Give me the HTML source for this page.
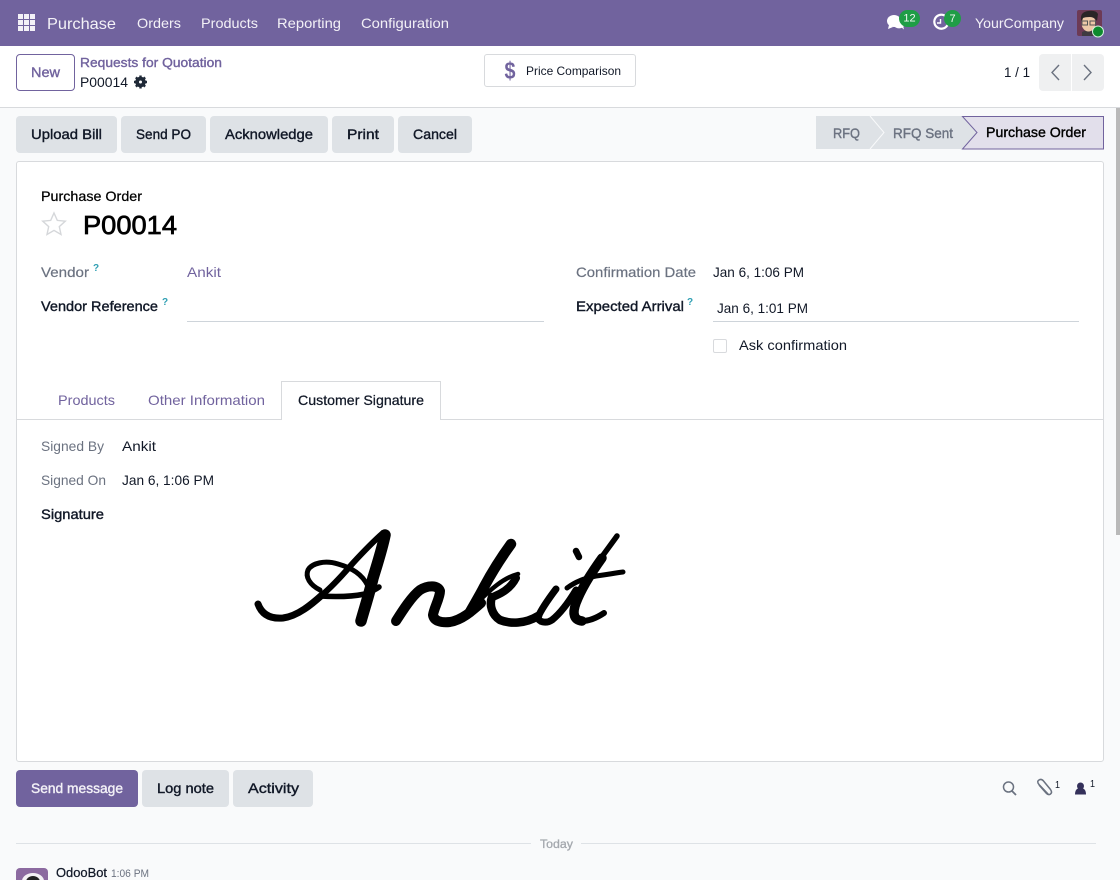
<!DOCTYPE html>
<html lang="en"><head><meta charset="utf-8"><title>P00014 - Purchase</title>
<style>
html,body{margin:0;padding:0}
body{width:1120px;height:880px;overflow:hidden;position:relative;background:#f9fafb;font-family:"Liberation Sans",sans-serif}
.b{position:absolute;box-sizing:border-box}
.g{background:#dee2e6;border-radius:4px}
svg{position:absolute;left:0;top:0}
text{font-family:"Liberation Sans",sans-serif;font-size:14px;fill:#374151}
.n{fill:#f3f1f7}
.y{fill:#6b7280}
.p{fill:#71639e}
.k{fill:#111827}
.m{stroke-width:.38px}
.k.m{stroke:#111827}
.p.m{stroke:#71639e}
.y.m{stroke:#6b7280}
.n.m{stroke:#f3f1f7}
.q{font-size:10px;fill:#2f9fb3;font-weight:bold}
</style></head><body>
<div class="b" style="left:0;top:0;width:1120px;height:46px;background:#71639e"></div>
<div class="b" style="left:0;top:46px;width:1120px;height:62px;background:#fff;border-bottom:1px solid #d8dadd"></div>
<div class="b" style="left:1116px;top:108px;width:4px;height:427px;background:#b9b9b9"></div>
<div class="b" style="left:16px;top:54px;width:59px;height:37px;background:#fff;border:1px solid #71639e;border-radius:4px"></div>
<div class="b" style="left:484px;top:54px;width:152px;height:33px;background:#fff;border:1px solid #d8dadd;border-radius:3px"></div>
<div class="b" style="left:1039px;top:54px;width:32px;height:37px;background:#eff0f1;border-radius:4px 0 0 4px"></div>
<div class="b" style="left:1072px;top:54px;width:32px;height:37px;background:#eff0f1;border-radius:0 4px 4px 0"></div>
<div class="b g" style="left:16px;top:116px;width:101px;height:37px"></div>
<div class="b g" style="left:121px;top:116px;width:85px;height:37px"></div>
<div class="b g" style="left:210px;top:116px;width:118px;height:37px"></div>
<div class="b g" style="left:332px;top:116px;width:62px;height:37px"></div>
<div class="b g" style="left:398px;top:116px;width:74px;height:37px"></div>
<div class="b" style="left:16px;top:161px;width:1088px;height:601px;background:#fff;border:1px solid #d8dadd;border-radius:3px"></div>
<div class="b" style="left:17px;top:419px;width:1086px;height:1px;background:#d8dadd"></div>
<div class="b" style="left:281px;top:381px;width:160px;height:39px;background:#fff;border:1px solid #d8dadd;border-bottom:0"></div>
<div class="b" style="left:187px;top:321px;width:357px;height:1px;background:#ced4da"></div>
<div class="b" style="left:713px;top:321px;width:366px;height:1px;background:#ced4da"></div>
<div class="b" style="left:713px;top:339px;width:14px;height:14px;background:#fff;border:1px solid #d8dadd;border-radius:2px"></div>
<div class="b" style="left:16px;top:770px;width:122px;height:37px;background:#71639e;border-radius:4px"></div>
<div class="b g" style="left:142px;top:770px;width:87px;height:37px"></div>
<div class="b g" style="left:233px;top:770px;width:80px;height:37px"></div>
<div class="b" style="left:16px;top:843px;width:515px;height:1px;background:#dee2e6"></div>
<div class="b" style="left:581px;top:843px;width:515px;height:1px;background:#dee2e6"></div>

<svg width="1120" height="880" viewBox="0 0 1120 880" xmlns="http://www.w3.org/2000/svg">
<!-- apps grid -->
<g fill="#f3f1f7"><rect x="18" y="14" width="5" height="5"/><rect x="24" y="14" width="5" height="5"/><rect x="30" y="14" width="5" height="5"/><rect x="18" y="20" width="5" height="5"/><rect x="24" y="20" width="5" height="5"/><rect x="30" y="20" width="5" height="5"/><rect x="18" y="26" width="5" height="5"/><rect x="24" y="26" width="5" height="5"/><rect x="30" y="26" width="5" height="5"/></g>
<text class="n" x="47" y="29" style="font-size:16px" textLength="69" lengthAdjust="spacingAndGlyphs">Purchase</text>
<text class="n" x="137" y="28" textLength="44" lengthAdjust="spacingAndGlyphs">Orders</text>
<text class="n" x="201" y="28" textLength="57" lengthAdjust="spacingAndGlyphs">Products</text>
<text class="n" x="277" y="28" textLength="64" lengthAdjust="spacingAndGlyphs">Reporting</text>
<text class="n" x="361" y="28" textLength="88" lengthAdjust="spacingAndGlyphs">Configuration</text>
<!-- systray -->
<g fill="#fff"><ellipse cx="894" cy="21" rx="7" ry="6"/><path d="M889 25l-1 4 5-2z"/><ellipse cx="899" cy="25" rx="5" ry="3.4"/><path d="M901 27l3 2.500-1-4z"/></g>
<rect x="899" y="10" width="21" height="17" rx="8.500" fill="#1f9d46"/>
<text x="909.500" y="21.500" text-anchor="middle" style="font-size:11px;fill:#f2f8f3">12</text>
<path d="M946 16.500A7 7 0 1 0 947.500 25" fill="none" stroke="#fff" stroke-width="2.200"/><path d="M940.500 19v4h-3.500" fill="none" stroke="#fff" stroke-width="1.400"/>
<rect x="944" y="10" width="17" height="17" rx="8.500" fill="#1f9d46"/>
<text x="952.500" y="22" text-anchor="middle" style="font-size:11px;fill:#f2f8f3">7</text>
<text class="n" x="975" y="28" textLength="89" lengthAdjust="spacingAndGlyphs">YourCompany</text>
<!-- user avatar -->
<rect x="1077" y="10" width="25" height="26" rx="2" fill="#6d3a55"/>
<path d="M1082 36v-4q5-3 10-1l5 5z" fill="#3f3a40"/>
<ellipse cx="1088.500" cy="23" rx="7" ry="8.500" fill="#eec8a8"/>
<path d="M1081 20q-1-8 7-9q8-1 10 3l-1 7q-3-4-7-4q-5 0-7 1l-1 3z" fill="#2a2526"/>
<g fill="none" stroke="#555" stroke-width="1"><rect x="1082" y="21" width="5.500" height="4"/><rect x="1090" y="21" width="5.500" height="4"/></g>
<circle cx="1098" cy="31.500" r="5.500" fill="#0d8a2d" stroke="#d5eee0" stroke-width="1"/>
<!-- control panel -->
<text class="p m" x="31" y="77" textLength="29" lengthAdjust="spacingAndGlyphs">New</text>
<text class="p m" x="80" y="67" style="font-size:13px" textLength="142" lengthAdjust="spacingAndGlyphs">Requests for Quotation</text>
<text class="k" x="80" y="87" textLength="48" lengthAdjust="spacingAndGlyphs">P00014</text>
<g transform="translate(140.500 82)"><circle r="3.700" fill="none" stroke="#1f2937" stroke-width="3.200"/><g stroke="#1f2937" stroke-width="2.400"><path d="M0-6.500V6.500M-6.500 0H6.500M-4.600-4.600L4.600 4.600M-4.600 4.600L4.600-4.600"/></g><circle r="1.500" fill="#fff"/></g>
<text class="p" x="504.500" y="78.500" style="font-size:24px;font-weight:bold" textLength="11" lengthAdjust="spacingAndGlyphs">$</text>
<text class="k" x="526" y="75" style="font-size:12px" textLength="95" lengthAdjust="spacingAndGlyphs">Price Comparison</text>
<text class="k" x="1004" y="77" textLength="26" lengthAdjust="spacingAndGlyphs">1 / 1</text>
<path d="M1059 65l-7 7.500 7 7.500M1084 65l7 7.500-7 7.500" fill="none" stroke="#6b7280" stroke-width="1.400"/>
<!-- action buttons -->
<text class="k m" x="31" y="139" textLength="71" lengthAdjust="spacingAndGlyphs">Upload Bill</text>
<text class="k m" x="136" y="139" textLength="55" lengthAdjust="spacingAndGlyphs">Send PO</text>
<text class="k m" x="225" y="139" textLength="88" lengthAdjust="spacingAndGlyphs">Acknowledge</text>
<text class="k m" x="347" y="139" textLength="32" lengthAdjust="spacingAndGlyphs">Print</text>
<text class="k m" x="413" y="139" textLength="44" lengthAdjust="spacingAndGlyphs">Cancel</text>
<!-- status bar -->
<path d="M816 116H870L884 132.500 870 149H816z" fill="#dee2e6"/>
<path d="M870 116H962L977 132.500 962 149H870L884 132.500z" fill="#dee2e6"/>
<path d="M870 116L884 132.500 870 149" fill="none" stroke="#f9fafb" stroke-width="1"/>
<path d="M962.500 116.500H1103.500V149H962.500L977 132.500z" fill="#e2dfeb" stroke="#71639e" stroke-width="1"/>
<text class="y m" x="833" y="138" textLength="27" lengthAdjust="spacingAndGlyphs">RFQ</text>
<text class="y m" x="893" y="138" textLength="60" lengthAdjust="spacingAndGlyphs">RFQ Sent</text>
<text class="k m" x="986" y="137" textLength="100" lengthAdjust="spacingAndGlyphs" style="fill:#000;stroke:#000">Purchase Order</text>
<!-- form -->
<text class="k m" x="41" y="201" style="fill:#000;stroke:#000;stroke-width:.25px" textLength="101" lengthAdjust="spacingAndGlyphs">Purchase Order</text>
<path d="M54 213l3.300 7.400 8 .8-6 5.400 1.700 7.900-7-4.100-7 4.100 1.700-7.900-6-5.400 8-.8z" fill="none" stroke="#d5d7da" stroke-width="1.400"/>
<text x="83" y="234" style="font-size:26px;fill:#000;stroke:#000;stroke-width:.7px" textLength="94" lengthAdjust="spacingAndGlyphs">P00014</text>
<text class="y m" x="41" y="277" style="stroke-width:.2px" textLength="48" lengthAdjust="spacingAndGlyphs">Vendor</text><text class="q" x="93" y="271">?</text>
<text class="p" x="187" y="277" textLength="34" lengthAdjust="spacingAndGlyphs">Ankit</text>
<text class="k m" x="41" y="311" textLength="117" lengthAdjust="spacingAndGlyphs">Vendor Reference</text><text class="q" x="162" y="305">?</text>
<text class="y m" x="576" y="277" style="stroke-width:.2px" textLength="120" lengthAdjust="spacingAndGlyphs">Confirmation Date</text>
<text class="k" x="713" y="277" textLength="91" lengthAdjust="spacingAndGlyphs">Jan 6, 1:06 PM</text>
<text class="k m" x="576" y="311" textLength="108" lengthAdjust="spacingAndGlyphs">Expected Arrival</text><text class="q" x="687" y="305">?</text>
<text class="k" x="717" y="313" textLength="91" lengthAdjust="spacingAndGlyphs">Jan 6, 1:01 PM</text>
<text class="k" x="739" y="350" textLength="108" lengthAdjust="spacingAndGlyphs">Ask confirmation</text>
<!-- tabs -->
<text class="p" x="58" y="405" textLength="57" lengthAdjust="spacingAndGlyphs">Products</text>
<text class="p" x="148" y="405" textLength="117" lengthAdjust="spacingAndGlyphs">Other Information</text>
<text class="k m" x="298" y="405" style="stroke-width:.25px" textLength="126" lengthAdjust="spacingAndGlyphs">Customer Signature</text>
<text class="y" x="41" y="451" textLength="63" lengthAdjust="spacingAndGlyphs">Signed By</text>
<text class="k" x="122" y="451" textLength="34" lengthAdjust="spacingAndGlyphs">Ankit</text>
<text class="y" x="41" y="485" textLength="65" lengthAdjust="spacingAndGlyphs">Signed On</text>
<text class="k" x="122" y="485" textLength="92" lengthAdjust="spacingAndGlyphs">Jan 6, 1:06 PM</text>
<text class="k m" x="41" y="519" textLength="63" lengthAdjust="spacingAndGlyphs">Signature</text>
<!-- handwritten signature drawing (the original is a picture, not typed text) -->
<g fill="none" stroke="#000" stroke-linecap="round" stroke-linejoin="round">
<!-- A -->
<path stroke-width="7" d="M258 604C262 615 271 619 283 618C298 616 312 604 322 595"/>
<path stroke-width="6" d="M322 595C335 584 345 572 353 563C365 550 375 540 383 533"/>
<path stroke-width="11.500" d="M385 535C383 545 378 562 373 578C369 595 364 610 361 621"/>
<path stroke-width="5" d="M320 590C310 585 305 577 308 570C312 563 325 560 338 564C352 568 362 574 368 586"/>
<path stroke-width="5.500" d="M320 596C335 597 350 597 365 594C370 592 375 590 379 587"/>
<!-- n -->
<path stroke-width="10" d="M396 621C403 610 412 596 420 590C428 585 438 585 440 591C440 598 434 608 433 615C434 621 441 623 450 622C462 620 472 611 481 603"/>
<!-- k -->
<path stroke-width="10.500" d="M511 544C503 555 492 572 484 587C480 595 475 603 470 612"/>
<path stroke-width="4.500" d="M478 602C490 590 503 578 518 574"/>
<path stroke-width="8" d="M516 578C512 586 505 592 495 596"/>
<path stroke-width="8.500" d="M492 597C489 605 492 615 500 620C510 624 525 624 538 616"/>
<!-- i -->
<path stroke-width="7" d="M556 589C550 597 541 610 538 617C538 622 546 624 552 620C562 612 570 600 576 590"/>
<path stroke-width="6.500" d="M576 551L579 557"/>
<!-- t -->
<path stroke-width="5.500" d="M617 536C612 543 606 551 601 558"/>
<path stroke-width="9.500" d="M602 558C592 572 582 587 576 603C572 614 574 620 582 621"/>
<path stroke-width="6" d="M582 621C590 621 598 617 604 613"/>
<path stroke-width="5" d="M567 588C575 582 585 578 596 576C605 575 615 573 623 572"/>
</g>
<!-- chatter -->
<text class="n m" x="31" y="793" textLength="92" lengthAdjust="spacingAndGlyphs">Send message</text>
<text class="k m" x="157" y="793" textLength="57" lengthAdjust="spacingAndGlyphs">Log note</text>
<text class="k m" x="248" y="793" textLength="51" lengthAdjust="spacingAndGlyphs">Activity</text>
<circle cx="1008.500" cy="787" r="5" fill="none" stroke="#6b7280" stroke-width="1.500"/><path d="M1012 791l4 4" stroke="#6b7280" stroke-width="1.800"/>
<path d="M1048.500 794.500l-9.500-10q-2.500-3 0-4.500 2.500-1.500 4.500 1l7 8.500q2 3 0 4.500-2 1.500-4-.5l-7.500-8.500" fill="none" stroke="#6b7280" stroke-width="1.500"/>
<text class="k" x="1055" y="788" style="font-size:10px" textLength="5" lengthAdjust="spacingAndGlyphs">1</text>
<circle cx="1080.500" cy="786" r="3.500" fill="#34305a"/><path d="M1075 794.500q0-6.500 5.500-6.500t5.500 6.500z" fill="#34305a"/>
<text class="k" x="1090" y="787" style="font-size:10px" textLength="5" lengthAdjust="spacingAndGlyphs">1</text>
<text x="540" y="848" style="font-size:12px;fill:#a4a8ae;stroke:#a4a8ae;stroke-width:.3px" textLength="33" lengthAdjust="spacingAndGlyphs">Today</text>
<rect x="16" y="868" width="32" height="20" rx="4" fill="#8c6aa0"/>
<ellipse cx="33" cy="881" rx="11" ry="8" fill="#f4f1f5"/><ellipse cx="33" cy="882" rx="7" ry="6" fill="#222"/>
<text class="k m" x="56" y="877" style="font-size:13px;stroke-width:.25px" textLength="51" lengthAdjust="spacingAndGlyphs">OdooBot</text>
<text class="y" x="111" y="877" style="font-size:11px" textLength="38" lengthAdjust="spacingAndGlyphs">1:06 PM</text>
</svg>
</body></html>
